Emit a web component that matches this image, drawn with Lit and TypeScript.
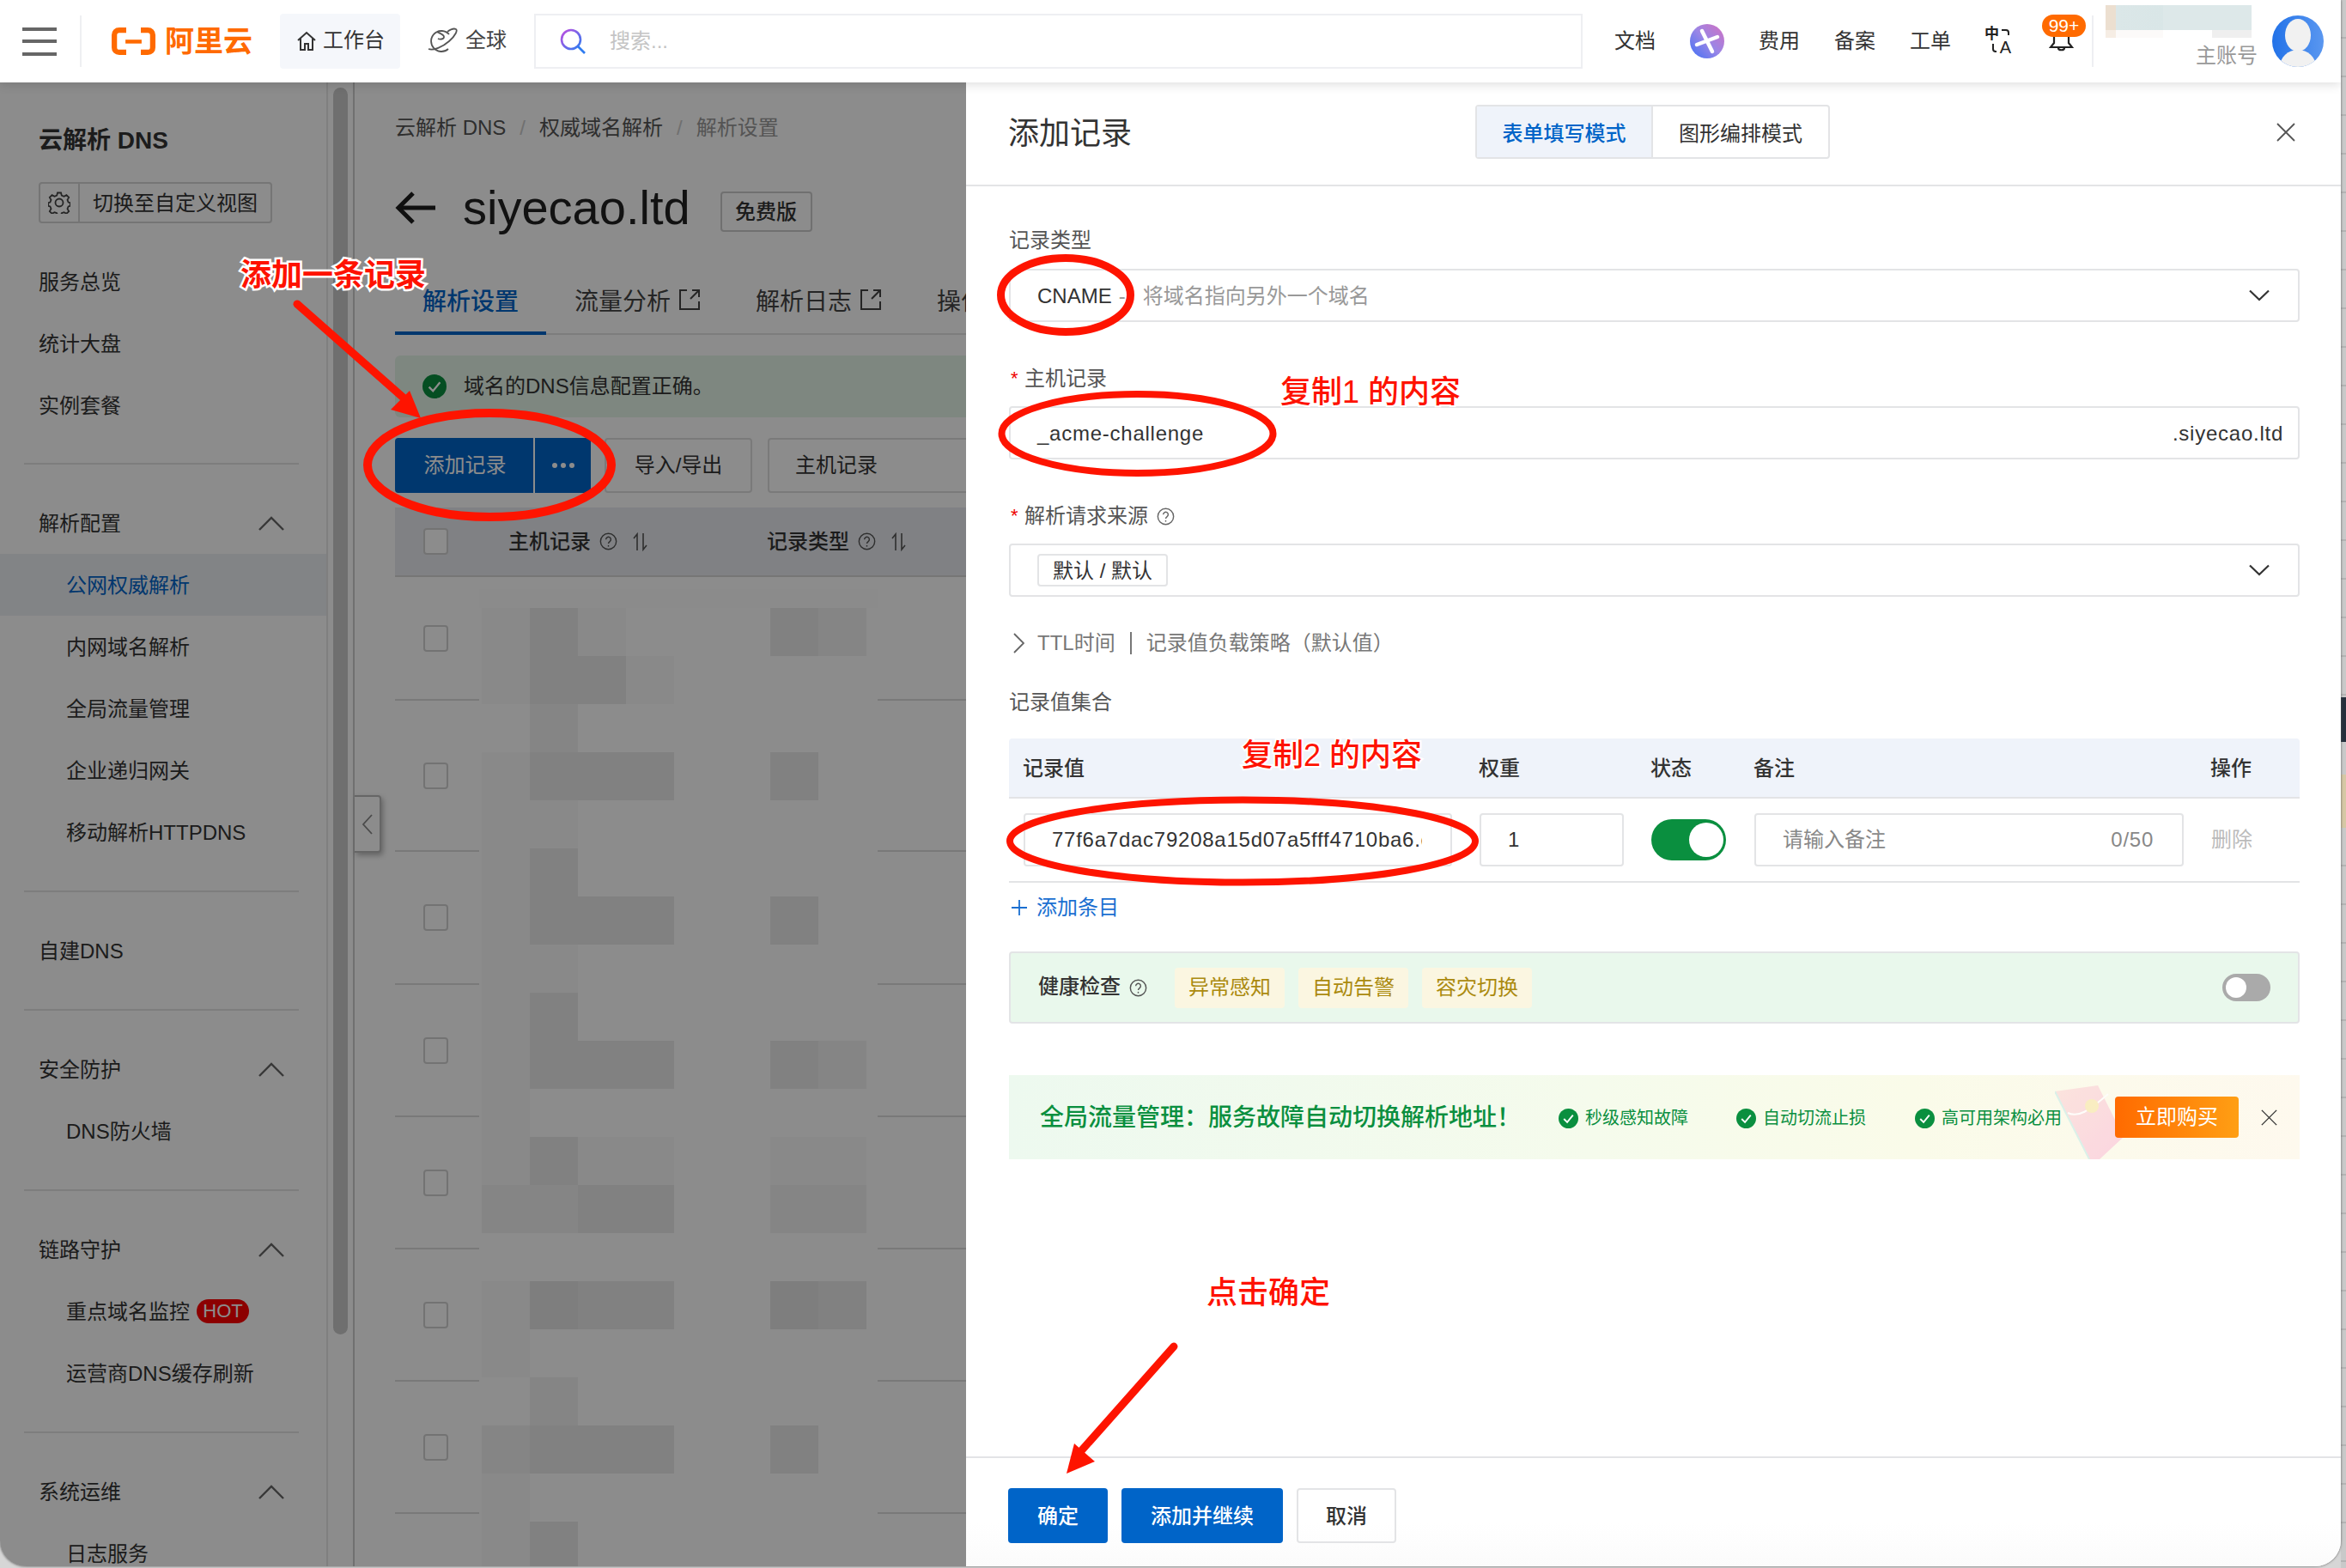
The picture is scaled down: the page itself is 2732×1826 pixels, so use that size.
import { LitElement, html, css } from "lit";
import { customElement } from "lit/decorators.js";

const qIcon = (s = 22, c = "#777") => html`<svg class="ico" width=${s} height=${s} viewBox="0 0 22 22" fill="none" stroke=${c} stroke-width="1.5"><circle cx="11" cy="11" r="9.6"/><path d="M8 8.6a3 3 0 1 1 4.7 2.5c-1 .7-1.7 1.2-1.7 2.6"/><path d="M11 15.6v1.8"/></svg>`;
const sortIcon = () => html`<svg class="ico" width="20" height="22" viewBox="0 0 20 22" fill="none" stroke="#555" stroke-width="1.6"><path d="M6 21V2L2 7"/><path d="M13 1v19l4-5"/></svg>`;
const extIcon = () => html`<svg class="ico ext" width="24" height="24" viewBox="0 0 24 24" fill="none" stroke="#444" stroke-width="2"><path d="M9 1H1v22h22V14"/><path d="M15 1h8v8"/><path d="M23 1 13 11"/></svg>`;
const chevUp = () => html`<svg class="ico" width="30" height="17" viewBox="0 0 30 17" fill="none" stroke="#666" stroke-width="2.4"><path d="M1 16 15 2l14 14"/></svg>`;
const chevDown = () => html`<svg class="ico" width="24" height="14" viewBox="0 0 24 14" fill="none" stroke="#333" stroke-width="2.2"><path d="M1 1.5 12 12 23 1.5"/></svg>`;
const checkDot = (s = 23) => html`<svg class="ico" width=${s} height=${s} viewBox="0 0 24 24"><circle cx="12" cy="12" r="12" fill="#0a8f3f"/><path d="M6.5 12.5 10.5 16.5 17.5 8" fill="none" stroke="#fff" stroke-width="2"/></svg>`;
const closeX = (s = 22, w = 1.8, c = "#444") => html`<svg class="ico" width=${s} height=${s} viewBox="0 0 22 22" fill="none" stroke=${c} stroke-width=${w}><path d="M1 1l20 20M21 1 1 21"/></svg>`;

const MOSAIC = [
  "aca...cb.", "acca.....", ".b.......", "accc..c..", "aa.......",
  "ac.......", "accc..c..", "aa.......", "ac.......", "accc..cb.",
  "a........", "acaa..aa.", "bbcc..bb.", ".........", "adcc..dc.",
  "a........", ".b.......", "bccc..c..", "a........", "ac.......",
];
const ROW_HEIGHTS = [144, 176, 155, 154, 154, 154, 154, 154];

const SIDE_GROUPS = [
  { head: "解析配置", open: true, items: ["公网权威解析", "内网域名解析", "全局流量管理", "企业递归网关", "移动解析HTTPDNS"] },
  { head: "自建DNS", open: false, items: [] },
  { head: "安全防护", open: true, items: ["DNS防火墙"] },
  { head: "链路守护", open: true, items: ["重点域名监控", "运营商DNS缓存刷新"] },
  { head: "系统运维", open: true, items: ["日志服务"] },
];

@customElement("app-root")
export class AppRoot extends LitElement {
  static styles = css`
    :host { display: block; width: 2732px; height: 1826px; overflow: hidden; font-family: "Liberation Sans", "Noto Sans CJK SC", sans-serif; font-size: 24px; line-height: 32px; color: #333; }
    * { box-sizing: border-box; }
    .ico { display: block; flex: none; }
    .screen { display: flex; width: 2732px; height: 1826px; background: #d6d6d6; }
    .window { position: relative; flex: none; width: 2726px; height: 1824px; background: #fff; overflow: hidden; border-radius: 0 0 30px 30px; display: flex; flex-direction: column; box-shadow: 0 0 3px #555; }
    .strip { flex: none; width: 6px; height: 1826px; display: flex; flex-direction: column; }
    .lines { background: repeating-linear-gradient(180deg, #c9c9c9 0, #c9c9c9 43px, #b4b4b4 43px, #b4b4b4 45px); }
    .s1 { height: 812px; } .s2 { height: 52px; background: #252f3c; } .s3 { height: 38px; } .s4 { height: 62px; background: #d6c8a5; } .s5 { flex: 1; }

    /* top bar */
    .top { position: relative; z-index: 3; flex: none; height: 96px; background: #fff; display: flex; align-items: center; box-shadow: 0 2px 12px rgba(0,0,0,.14); white-space: nowrap; }
    .burger { margin-left: 26px; width: 40px; height: 33px; display: flex; flex-direction: column; justify-content: space-between; }
    .burger i { display: block; height: 4px; background: #666; }
    .vline { width: 2px; height: 60px; background: #eeeff2; }
    .v1 { margin-left: 27px; }
    .logo { margin-left: 35px; width: 164px; display: flex; align-items: center; color: #ff6a00; font-size: 34px; font-weight: 700; line-height: 36px; }
    .logo svg { margin-right: 11px; }
    .pill { margin-left: 32px; width: 140px; height: 64px; border-radius: 4px; background: #f5f7fb; display: flex; align-items: center; padding-left: 20px; gap: 8px; }
    .pill span, .globe span { position: relative; top: -1px; }
    .globe { margin-left: 31px; display: flex; align-items: center; gap: 9px; color: #444; }
    .search { margin-left: 32px; width: 1221px; height: 64px; border: 2px solid #eeeff2; display: flex; align-items: center; padding-left: 28px; color: #c4c4c4; gap: 28px; }
    .n1 { margin-left: 37px; } .n2, .n3, .n4, .n5, .n6 { margin-left: 40px; }
    .lang { position: relative; width: 30px; height: 28px; color: #222; }
    .lang b { position: absolute; left: -1px; top: -4px; font-size: 17px; line-height: 20px; font-weight: 700; }
    .lang u { position: absolute; right: 0; bottom: -3px; font-size: 20px; line-height: 20px; text-decoration: none; }
    .lang svg { position: absolute; left: 0; top: 0; }
    .bell { position: relative; margin-left: 44px; width: 29px; height: 64px; }
    .bell svg { position: absolute; left: 0; top: 17px; }
    .badge { position: absolute; left: -8px; top: 1px; width: 51px; height: 26px; border-radius: 13px; background: #ff6a00; color: #fff; font-size: 21px; line-height: 26px; text-align: center; }
    .v2 { margin-left: 21px; }
    .acct { margin-left: 14px; width: 177px; height: 71px; display: flex; flex-direction: column; align-self: flex-start; margin-top: 6px; }
    .blur1 { width: 170px; height: 30px; background: linear-gradient(90deg, #ecdfd0 12px, #dbe7e8 12px, #d9e6e7 67px, #dde8e9 67px); }
    .blur2 { width: 170px; height: 10px; background: linear-gradient(90deg, #f6ede4 12px, #fcfaf9 12px, #fcfaf9 67px, #fff 67px, #fff 124px, #efefef 124px); }
    .acct span { margin-top: 9px; text-align: right; color: #999; line-height: 24px; }
    .avatar { margin-left: 17px; }

    /* page under the drawer */
    .page { flex: 1; min-height: 0; display: flex; position: relative; }
    .side { flex: none; width: 380px; padding-top: 48px; }
    .side-title { font-size: 28px; font-weight: 600; line-height: 36px; margin-left: 45px; padding-top: 2px; margin-bottom: -2px; }
    .custom { margin: 32px 0 0 45px; width: 272px; height: 48px; border: 2px solid #d6d6d6; border-radius: 4px; display: flex; align-items: center; }
    .custom .cell { width: 46px; height: 100%; border-right: 2px solid #d6d6d6; display: flex; align-items: center; justify-content: center; margin-right: 15px; }
    .custom span { padding-top: 2px; }
    .first { margin-top: 32px; padding-bottom: 31px; }
    .si { height: 72px; display: flex; align-items: center; padding: 2px 49px 0 45px; justify-content: space-between; }
    .si .ico { margin-top: -2px; }
    .sub { padding-left: 77px; justify-content: flex-start; }
    .sub.on { background: #edf0f5; color: #0064c8; }
    .hot { margin-left: 8px; width: 61px; height: 28px; border-radius: 14px; background: #f00; color: #fff; font-size: 22px; line-height: 28px; text-align: center; margin-top: -2px; }
    .group { padding: 32px 0; }
    .divider { margin-left: 28px; width: 320px; height: 2px; background: #e4e4e4; }
    .rail { flex: none; width: 31px; border-left: 2px solid #e8e8e8; padding: 6px 0 0 6px; }
    .thumb { width: 17px; height: 1452px; border-radius: 9px; background: #cacaca; }
    .main { flex: 1; min-width: 0; border-left: 2px solid #ccc; padding: 34px 0 0 47px; overflow: hidden; white-space: nowrap; }
    .crumb { display: flex; color: #555; line-height: 36px; padding-top: 1px; margin-bottom: -1px; }
    .crumb i { font-style: normal; color: #ccc; margin: 0 16px; }
    .crumb .last { color: #999; }
    .titlebar { margin-top: 57px; height: 47px; display: flex; align-items: flex-start; }
    .titlebar h1 { margin: 0 0 0 32px; font-size: 56px; line-height: 38px; font-weight: 400; color: #222; }
    .free { margin-left: 35px; width: 107px; height: 47px; border: 2px solid #ccc; border-radius: 4px; line-height: 43px; text-align: center; font-weight: 500; }
    .tabs { margin-top: 43px; height: 77px; display: flex; gap: 1px; border-bottom: 2px solid #e3e3e3; }
    .tab { position: relative; height: 77px; padding: 19px 32px 0; font-size: 28px; line-height: 40px; display: flex; color: #444; }
    .tab .ext { margin: 5px 0 0 10px; }
    .tab.on { color: #0064c8; font-weight: 500; border-bottom: 4px solid #0064c8; }
    .alert { margin-top: 24px; height: 72px; border-radius: 6px 0 0 6px; background: #e6f6e9; display: flex; align-items: center; padding-left: 32px; gap: 20px; }
    .tools { margin-top: 24px; display: flex; height: 64px; }
    .split { width: 228px; background: #0064c8; border-radius: 4px; display: flex; color: #fff; align-items: center; }
    .split b { width: 163px; font-weight: 400; text-align: center; line-height: 64px; border-right: 2px solid #fff; padding-left: 2px; }
    .split svg { margin-left: 20px; }
    .ghost { height: 64px; border: 2px solid #dedede; border-radius: 4px; line-height: 60px; }
    .g1 { margin-left: 16px; width: 172px; text-align: center; }
    .g2 { margin-left: 18px; width: 420px; padding-left: 30px; }
    .table { position: relative; margin-top: 17px; overflow: hidden; }
    .thead { height: 81px; background: #e9ecf1; border-bottom: 2px solid #d8d8d8; display: flex; align-items: center; padding-left: 33px; font-weight: 500; }
    .thead .h { display: flex; align-items: center; }
    .h1 { margin-left: 70px; width: 301px; }
    .hq2 { margin-left: 10px; }
    .sort1 { margin-left: 17px; }
    .box { width: 29px; height: 31px; border: 2px solid #d2d2d2; border-radius: 4px; background: #fff; flex: none; }
    .rec { border-bottom: 2px solid #dcdcdc; display: flex; align-items: center; padding-left: 33px; }
    .mosaic { position: absolute; left: 98px; top: 95px; width: 464px; height: 1400px; background: #fff; }
    .mstrip { width: 464px; height: 22px; background: #fdfdfd; }
    .mgrid { margin-left: 3px; display: grid; grid-template-columns: repeat(9, 56px); grid-auto-rows: 56px; }
    .ma { background: #fafafa; } .mb { background: #f3f3f3; } .mc { background: #ececec; } .md { background: #e6e6e6; }
    .collapse { position: absolute; left: 413px; top: 830px; width: 31px; height: 67px; background: #fff; border: 2px solid #bbb; border-left: 0; border-radius: 0 4px 4px 0; box-shadow: 2px 3px 6px rgba(0,0,0,.3); display: flex; align-items: center; justify-content: center; }

    .shade { position: absolute; z-index: 1; left: 0; right: 0; top: 96px; bottom: 0; background: rgba(0,0,0,.45); }

    /* drawer */
    .drawer { position: absolute; z-index: 2; left: 1125px; right: 0; top: 96px; bottom: 0; background: #fff; display: flex; flex-direction: column; white-space: nowrap; }
    .dhead { flex: none; height: 121px; border-bottom: 2px solid #e3e4e6; display: flex; align-items: center; padding: 0 53px 4px 49px; }
    .dhead h2 { margin: 0; width: 144px; font-size: 36px; line-height: 48px; font-weight: 400; padding-top: 4px; }
    .seg { margin-left: 400px; width: 413px; height: 63px; border: 2px solid #e3e4e6; border-radius: 4px; display: flex; line-height: 63px; text-align: center; }
    .seg .a { width: 205px; background: #eff3fa; color: #0064c8; font-weight: 500; border-right: 2px solid #e3e4e6; }
    .seg .b { flex: 1; }
    .dclose { margin-left: auto; }
    .form { flex: 1; min-height: 0; padding: 47px 48px 0 50px; display: flex; flex-direction: column; }
    .lab { color: #555; display: flex; align-items: center; height: 32px; }
    .lab .star { width: 18px; padding-left: 2px; color: #e00; font-size: 22px; }
    .lab .ico { margin-left: 10px; }
    .sp49 { margin-top: 49px; padding-top: 2px; }
    .field { margin-top: 17px; height: 62px; border: 2px solid #e3e4e6; border-radius: 4px; display: flex; align-items: center; padding: 2px 33px 0 31px; }
    .field .end { margin-left: auto; }
    .field .dim { color: #999; }
    .field .dash { margin-left: 8px; }
    .field .desc { margin-left: 20px; }
    .wide { letter-spacing: .75px; }
    .field .tag { margin-top: -2px; }
    .field .chev { margin-top: -2px; }
    .tag { height: 38px; border: 2px solid #e3e4e6; border-radius: 4px; padding: 0 16px; line-height: 36px; }
    .ttl { margin-top: 38px; height: 32px; display: flex; align-items: center; color: #777; padding-left: 5px; }
    .ttl svg { margin-right: 15px; }
    .ttl i { width: 2px; height: 26px; background: #777; margin: 0 17px; }
    .sp36 { margin-top: 36px; padding-top: 2px; }
    .vhead, .vrow { display: grid; grid-template-columns: 499px 168px 88px 500px 1fr; column-gap: 32px; }
    .vrow { padding-left: 17px; }
    .vhead { margin-top: 27px; height: 70px; background: #eff3fa; border-bottom: 2px solid #e3e4e6; border-radius: 4px 4px 0 0; align-items: center; font-weight: 500; padding: 2px 0 0 16px; }
    .vrow { height: 98px; border-bottom: 2px solid #e3e4e6; align-items: center; }
    .inp { height: 62px; border: 2px solid #e3e4e6; border-radius: 4px; display: flex; align-items: center; padding: 0 33px 0 31px; overflow: hidden; }
    .inp .clip { overflow: hidden; flex: 1; letter-spacing: .75px; }
    .ph { color: #888; flex: 1; }
    .count { color: #888; letter-spacing: .75px; }
    .sw { width: 87px; height: 48px; border-radius: 24px; background: #0a8f3f; display: flex; justify-content: flex-end; padding: 4px 3px; }
    .sw i { width: 40px; height: 40px; border-radius: 50%; background: #fff; }
    .del { color: #bbb; }
    .addrow { margin-top: 13px; height: 32px; display: flex; align-items: center; gap: 11px; color: #1a6fd1; padding-left: 3px; }
    .health { margin-top: 35px; height: 84px; border: 2px solid #e3e4e6; border-radius: 4px; background: #e9f8ec; display: flex; align-items: center; padding: 0 32px 0 32px; }
    .health b { font-weight: 500; margin-top: -2px; }
    .hq { margin: 0 32px 0 10px; }
    .ht { width: 128px; height: 47px; background: #fbf6e1; border-radius: 4px; color: #ab8a0f; text-align: center; line-height: 45px; margin-right: 16px; }
    .sw2 { margin-left: auto; width: 56px; height: 32px; border-radius: 16px; background: #aaa; padding: 4px; }
    .sw2 i { display: block; width: 24px; height: 24px; border-radius: 50%; background: #fff; }
    .banner { position: relative; margin-top: 60px; height: 98px; background: linear-gradient(90deg, #edf9ef 0%, #f5fbec 45%, #fafbe9 70%, #fef9ee 100%); display: flex; align-items: center; padding: 2px 0 0 36px; }
    .banner .ttlb { width: 604px; font-size: 28px; font-weight: 500; color: #0a8f3f; line-height: 36px; }
    .chk { display: flex; align-items: center; gap: 8px; color: #0a8f3f; font-size: 20px; }
    .c2 { margin-left: 56px; } .c3 { margin-left: 57px; }
    .env { position: absolute; left: 1218px; top: 12px; opacity: .75; }
    .buy { position: relative; margin: -2px 0 0 62px; width: 144px; height: 48px; border-radius: 4px; background: linear-gradient(90deg, #ff6a00, #ff9f14); color: #fff; text-align: center; line-height: 48px; }
    .bx { position: relative; margin: -2px 0 0 26px; }
    .foot { flex: none; height: 128px; border-top: 2px solid #e3e4e6; padding: 35px 0 0 49px; display: flex; gap: 16px; background: linear-gradient(180deg, #fff 60%, #fbfbfb); }
    .btn { height: 64px; border-radius: 4px; line-height: 66px; text-align: center; font-weight: 500; }
    .pri { background: #0064c8; color: #fff; }
    .b1 { width: 116px; } .b2 { width: 188px; }
    .b3 { width: 116px; border: 2px solid #e3e4e6; line-height: 62px; }

    /* red annotations */
    .marks { position: absolute; z-index: 5; left: 0; top: 0; pointer-events: none; }
    .note { position: absolute; z-index: 6; color: #fe1200; font-size: 36px; line-height: 40px; font-weight: 500; white-space: nowrap; }
    .n-a { left: 280px; top: 301px; font-weight: 700; -webkit-text-stroke: 5px #fff; paint-order: stroke fill; }
    .n-b { left: 1491px; top: 437px; -webkit-text-stroke: 4px #fff; paint-order: stroke fill; }
    .n-c { left: 1446px; top: 860px; -webkit-text-stroke: 4px #fff; paint-order: stroke fill; }
    .n-d { left: 1405px; top: 1486px; }
  `;

  private sideItem(g: { head: string; open: boolean; items: string[] }) {
    return html`<div class="divider"></div>
      <div class="group">
        <div class="si"><span>${g.head}</span>${g.open ? chevUp() : ""}</div>
        ${g.items.map((t) => html`<div class="si sub ${t === "公网权威解析" ? "on" : ""}">${t}${t === "重点域名监控" ? html`<span class="hot">HOT</span>` : ""}</div>`)}
      </div>`;
  }

  private topBar() {
    return html`<header class="top">
      <div class="burger"><i></i><i></i><i></i></div>
      <div class="vline v1"></div>
      <div class="logo">
        <svg width="57" height="36" viewBox="0 0 57 36" fill="none"><path d="M19 3.5H10C6 3.5 3.5 6 3.5 10v16c0 4 2.500 6.500 6.500 6.500h9" stroke="#ff6a00" stroke-width="7"/><path d="M38 3.500h9c4 0 6.500 2.500 6.500 6.500v16c0 4-2.500 6.500-6.500 6.500h-9" stroke="#ff6a00" stroke-width="7"/><rect x="18" y="16" width="21" height="5" fill="#ff6a00"/></svg>
        <span>阿里云</span>
      </div>
      <div class="pill">
        <svg class="ico" width="22" height="24" viewBox="0 0 22 24" fill="none" stroke="#333" stroke-width="2"><path d="M1 11 11 2l10 9"/><path d="M4 9v13h5v-7h4v7h5V9"/></svg>
        <span>工作台</span>
      </div>
      <div class="globe">
        <svg class="ico" width="36" height="32" viewBox="0 0 36 32" fill="none" stroke="#555" stroke-width="1.8"><path d="M26 8a12 12 0 1 0-1 17"/><path d="M2 25c6 2 16-2 24-9s10-13 8-14c-2-1-6 0-10 3"/><path d="M12 5c3 2 8 3 8 6s-5 3-7 2"/></svg>
        <span>全球</span>
      </div>
      <div class="search">
        <svg class="ico" width="30" height="30" viewBox="0 0 30 30" fill="none" stroke-width="2.6"><defs><linearGradient id="sg" x1="0" y1="0" x2="1" y2="1"><stop offset="0" stop-color="#c04ee0"/><stop offset="1" stop-color="#2f7cf0"/></linearGradient></defs><circle cx="13" cy="13" r="11" stroke="url(#sg)"/><path d="M21 21l8 8" stroke="#2f7cf0"/></svg>
        <span>搜索...</span>
      </div>
      <span class="n1">文档</span>
      <svg class="ico n2" width="40" height="40" viewBox="0 0 40 40"><defs><linearGradient id="xg" x1="1" y1="0" x2="0" y2="1"><stop offset="0" stop-color="#d36fc0"/><stop offset=".5" stop-color="#9a86e6"/><stop offset="1" stop-color="#3f6ff5"/></linearGradient></defs><circle cx="20" cy="20" r="20" fill="url(#xg)"/><path d="M14 8 26 32M8 24 32 15" stroke="#fff" stroke-width="4.500" stroke-linecap="round"/></svg>
      <span class="n3">费用</span>
      <span class="n4">备案</span>
      <span class="n5">工单</span>
      <div class="lang n6">
        <svg width="30" height="28" viewBox="0 0 30 28" fill="none" stroke="#222" stroke-width="2"><path d="M19 1h5a3 3 0 0 1 3 3v3"/><path d="M9 17v6a3 3 0 0 0 3 3h1"/></svg>
        <b>中</b><u>A</u>
      </div>
      <div class="bell">
        <svg width="29" height="28" viewBox="0 0 29 28" fill="none" stroke="#222" stroke-width="2.2"><path d="M6 8c0-4 4-7 8.500-7S23 4 23 8v9l4 5H2l4-5z"/><path d="M11 23c0 3 7 3 7 0"/></svg>
        <div class="badge">99+</div>
      </div>
      <div class="vline v2"></div>
      <div class="acct"><div class="blur1"></div><div class="blur2"></div><span>主账号</span></div>
      <svg class="ico avatar" width="60" height="60" viewBox="0 0 60 60"><defs><linearGradient id="ag" x1="0" y1="0" x2="1" y2="0"><stop offset="0" stop-color="#2272e8"/><stop offset="1" stop-color="#5a97f0"/></linearGradient><clipPath id="ac"><circle cx="30" cy="30" r="30"/></clipPath></defs><circle cx="30" cy="30" r="30" fill="url(#ag)"/><g clip-path="url(#ac)" fill="#f1f1f1"><ellipse cx="30" cy="23" rx="15" ry="19"/><ellipse cx="30" cy="60" rx="21" ry="20"/></g></svg>
    </header>`;
  }

  private leftPage() {
    return html`<div class="page">
      <aside class="side">
        <div class="side-title">云解析 DNS</div>
        <div class="custom">
          <div class="cell"><svg class="ico" width="26" height="26" viewBox="0 0 26 26" fill="none" stroke="#444" stroke-width="1.800"><path d="M11 1.500h4l.8 3.200 2.700 1.100 2.900-1.700 2.800 2.800-1.700 2.900 1.100 2.700 2.200.6v3.800l-2.200.6-1.100 2.700 1.700 2.900-2.800 2.800-2.900-1.700-2.700 1.100-.8 2.200h-4l-.8-2.200-2.700-1.100-2.900 1.700-2.800-2.800 1.700-2.900-1.100-2.700-2.200-.6v-3.800l2.200-.6 1.100-2.700-1.700-2.900 2.800-2.800 2.900 1.700 2.700-1.100z"/><circle cx="13" cy="13" r="4.500"/></svg></div>
          <span>切换至自定义视图</span>
        </div>
        <div class="first">
          ${["服务总览", "统计大盘", "实例套餐"].map((t) => html`<div class="si">${t}</div>`)}
        </div>
        ${SIDE_GROUPS.map((g) => this.sideItem(g))}
      </aside>
      <div class="rail"><div class="thumb"></div></div>
      <main class="main">
        <nav class="crumb"><span>云解析 DNS</span><i>/</i><span>权威域名解析</span><i>/</i><span class="last">解析设置</span></nav>
        <div class="titlebar">
          <svg class="ico" width="47" height="38" viewBox="0 0 47 38" fill="none" stroke="#1e1e1e" stroke-width="5"><path d="M47 19H5"/><path d="M21 2 4 19l17 17"/></svg>
          <h1>siyecao.ltd</h1>
          <div class="free">免费版</div>
        </div>
        <div class="tabs">
          <div class="tab on">解析设置</div>
          <div class="tab">流量分析${extIcon()}</div>
          <div class="tab">解析日志${extIcon()}</div>
          <div class="tab">操作日志</div>
        </div>
        <div class="alert">${checkDot(28)}<span>域名的DNS信息配置正确。</span></div>
        <div class="tools">
          <div class="split"><b>添加记录</b><svg class="ico" width="26" height="6" viewBox="0 0 26 6" fill="#fff"><circle cx="3" cy="3" r="3"/><circle cx="13" cy="3" r="3"/><circle cx="23" cy="3" r="3"/></svg></div>
          <div class="ghost g1">导入/导出</div>
          <div class="ghost g2">主机记录</div>
        </div>
        <div class="table">
          <div class="thead">
            <div class="box"></div>
            <div class="h h1">主机记录<span class="hq2">${qIcon(21, "#555")}</span><span class="sort1">${sortIcon()}</span></div>
            <div class="h">记录类型<span class="hq2">${qIcon(21, "#555")}</span><span class="sort1">${sortIcon()}</span></div>
          </div>
          ${ROW_HEIGHTS.map((h) => html`<div class="rec" style="height:${h}px"><div class="box"></div></div>`)}
          <div class="mosaic">
            <div class="mstrip"></div>
            <div class="mgrid">
              ${MOSAIC.flatMap((r) => r.split("").map((c) => html`<div class=${c === "." ? "" : "m" + c}></div>`))}
            </div>
          </div>
        </div>
      </main>
      <div class="collapse"><svg class="ico" width="13" height="24" viewBox="0 0 13 24" fill="none" stroke="#888" stroke-width="1.800"><path d="M12 1 2 12l10 11"/></svg></div>
    </div>`;
  }

  private drawer() {
    return html`<section class="drawer">
      <div class="dhead">
        <h2>添加记录</h2>
        <div class="seg"><div class="a">表单填写模式</div><div class="b">图形编排模式</div></div>
        <div class="dclose">${closeX(22, 1.8, "#555")}</div>
      </div>
      <div class="form">
        <div class="lab">记录类型</div>
        <div class="field"><span>CNAME</span><span class="dim dash">-</span><span class="dim desc">将域名指向另外一个域名</span><span class="end chev">${chevDown()}</span></div>
        <div class="lab sp49"><span class="star">*</span>主机记录</div>
        <div class="field"><span class="wide">_acme-challenge</span><span class="end wide" style="margin-right:-16px">.siyecao.ltd</span></div>
        <div class="lab sp49"><span class="star">*</span>解析请求来源${qIcon(21, "#666")}</div>
        <div class="field"><span class="tag">默认 / 默认</span><span class="end chev">${chevDown()}</span></div>
        <div class="ttl"><svg class="ico" width="13" height="24" viewBox="0 0 13 24" fill="none" stroke="#666" stroke-width="1.800"><path d="M1 1l11 11L1 23"/></svg><span>TTL时间</span><i></i><span>记录值负载策略（默认值）</span></div>
        <div class="lab sp36">记录值集合</div>
        <div class="vhead"><span>记录值</span><span>权重</span><span>状态</span><span>备注</span><span>操作</span></div>
        <div class="vrow">
          <div class="inp"><span class="clip">77f6a7dac79208a15d07a5fff4710ba6.cn</span></div>
          <div class="inp">1</div>
          <div class="sw"><i></i></div>
          <div class="inp"><span class="ph">请输入备注</span><span class="count">0/50</span></div>
          <span class="del">删除</span>
        </div>
        <div class="addrow"><svg class="ico" width="18" height="18" viewBox="0 0 18 18" stroke="#1a6fd1" stroke-width="1.800"><path d="M9 0v18M0 9h18"/></svg><span>添加条目</span></div>
        <div class="health">
          <b>健康检查</b><span class="hq">${qIcon(21, "#555")}</span>
          <span class="ht">异常感知</span><span class="ht">自动告警</span><span class="ht">容灾切换</span>
          <div class="sw2"><i></i></div>
        </div>
        <div class="banner">
          <svg class="env" width="90" height="86" viewBox="0 0 90 86"><defs><linearGradient id="eg" x1="0" y1="0" x2="1" y2="1"><stop offset="0" stop-color="#fbdcd9"/><stop offset="1" stop-color="#fbc9dc"/></linearGradient></defs><path d="M0 7 50 0 80 60 52 86H40z" fill="url(#eg)"/><path d="M0 7 40 86" stroke="#cfeee9" stroke-width="2" fill="none"/><path d="M15 32c12 6 24-2 47-22" stroke="#fff" stroke-width="2" fill="none"/><circle cx="43" cy="24" r="8" fill="#f8e9b4"/></svg>
          <span class="ttlb">全局流量管理：服务故障自动切换解析地址！</span>
          <span class="chk">${checkDot()}秒级感知故障</span>
          <span class="chk c2">${checkDot()}自动切流止损</span>
          <span class="chk c3">${checkDot()}高可用架构必用</span>
          <div class="buy">立即购买</div>
          <div class="bx">${closeX(19, 1.6, "#333")}</div>
        </div>
      </div>
      <div class="foot">
        <div class="btn pri b1">确定</div>
        <div class="btn pri b2">添加并继续</div>
        <div class="btn b3 b1">取消</div>
      </div>
    </section>`;
  }

  private marks() {
    const red = "#fe1400";
    return html`<svg class="marks" width="2726" height="1824" viewBox="0 0 2726 1824" fill="none">
      <ellipse cx="570" cy="541.500" rx="142" ry="60.500" stroke=${red} stroke-width="10"/>
      <ellipse cx="1241" cy="343.500" rx="75.500" ry="43" stroke=${red} stroke-width="9"/>
      <ellipse cx="1324.500" cy="505" rx="158" ry="46" stroke=${red} stroke-width="8"/>
      <ellipse cx="1447" cy="979.500" rx="271" ry="48" stroke=${red} stroke-width="8"/>
      <line x1="346" y1="354" x2="473" y2="466" stroke=${red} stroke-width="9" stroke-linecap="round"/>
      <polygon points="490,487 477,455 455,477" fill=${red}/>
      <line x1="1367" y1="1568" x2="1257" y2="1692" stroke=${red} stroke-width="9" stroke-linecap="round"/>
      <polygon points="1242,1716 1251,1681 1275,1702" fill=${red}/>
    </svg>
    <span class="note n-a">添加一条记录</span>
    <span class="note n-b">复制1 的内容</span>
    <span class="note n-c">复制2 的内容</span>
    <span class="note n-d">点击确定</span>`;
  }

  render() {
    return html`<div class="screen">
      <div class="window">
        ${this.topBar()}
        ${this.leftPage()}
        <div class="shade"></div>
        ${this.drawer()}
        ${this.marks()}
      </div>
      <div class="strip">
        <div class="s1 lines"></div><div class="s2"></div><div class="s3 lines"></div><div class="s4"></div><div class="s5 lines"></div>
      </div>
    </div>`;
  }
}
